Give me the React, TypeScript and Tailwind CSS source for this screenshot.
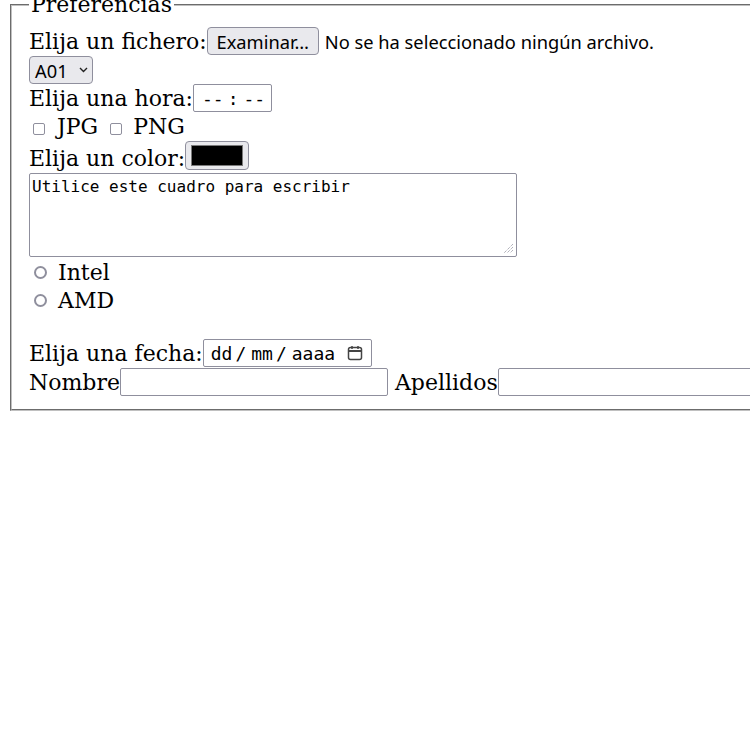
const sans = "font-['Noto_Sans',sans-serif]";
const mono = "font-['DejaVu_Sans_Mono',monospace]";

function GrayButton({ className, children }: { className: string; children?: React.ReactNode }) {
  return (
    <div className={`flex items-center border border-[#8f8f9d] bg-[#e9e9ed] rounded-[4px] ${className}`}>
      {children}
    </div>
  );
}

function Field({ className, children }: { className: string; children?: React.ReactNode }) {
  return (
    <div className={`flex items-center border border-[#8f8f9d] bg-white rounded-[2px] ${className}`}>
      {children}
    </div>
  );
}

function Checkbox() {
  return <span className="block w-[12px] h-[12px] mt-[6px] border border-[#8f8f9d] bg-white rounded-[2px]" />;
}

function Radio() {
  return <span className="block w-[13px] h-[13px] border-2 border-[#8f8f9d] bg-white rounded-full" />;
}

export default function App() {
  return (
    <div className="w-[750px] h-[750px] overflow-hidden bg-white text-black text-[22px] leading-[23px] font-['DejaVu_Serif',serif]">
      <fieldset className="ml-[10px] -mt-[6px] w-[780px] border-2 [border-style:groove] border-[#c0c0c0] pl-[17px] pr-[17px] pt-[11px] pb-[12px]">
        <legend className="px-[2px] leading-[22px]">Preferencias</legend>

        {/* fichero */}
        <div className="flex items-center h-[28px]">
          <span>Elija un fichero:</span>
          <GrayButton className={`w-[112px] h-[28px] justify-center text-[18.3px] ${sans}`}>Examinar…</GrayButton>
          <span className={`ml-[6px] text-[18.3px] ${sans}`}>No se ha seleccionado ningún archivo.</span>
        </div>

        {/* select */}
        <div className="flex items-end h-[29px]">
          <GrayButton className={`w-[64px] h-[28px] pl-[5px] text-[18.3px] ${sans}`}>
            <span>A01</span>
            <svg width="9" height="6" viewBox="0 0 9 6" className="ml-[11px]">
              <path d="M1 1 L4.5 4.5 L8 1" fill="none" stroke="#222" strokeWidth="1.4" />
            </svg>
          </GrayButton>
        </div>

        {/* hora */}
        <div className="flex items-center h-[28px]">
          <span>Elija una hora:</span>
          <Field className={`w-[79px] h-[28px] pl-[8px] text-[18px] ${mono}`}>
            <span>--</span>
            <span className="ml-[4px]">:</span>
            <span className="ml-[5px]">--</span>
          </Field>
        </div>

        {/* formatos */}
        <div className="flex items-center h-[28px]">
          <span className="ml-[4px]"><Checkbox /></span>
          <span className="ml-[12px]">JPG</span>
          <span className="ml-[12px]"><Checkbox /></span>
          <span className="ml-[11px]">PNG</span>
        </div>

        {/* color */}
        <div className="flex items-end h-[31px]">
          <span className="mb-[1px]">Elija un color:</span>
          <GrayButton className="w-[64px] h-[29px] mb-[1px] justify-center">
            <span className="block w-[52px] h-[21px] bg-black border border-[#7a7a7a]" />
          </GrayButton>
        </div>

        {/* texto */}
        <div className={`relative mt-[2px] w-[488px] h-[84px] border border-[#8f8f9d] rounded-[2px] pl-[2px] pt-[3px] text-[16px] leading-[19px] ${mono}`}>
          Utilice este cuadro para escribir
          <svg width="11" height="11" viewBox="0 0 11 11" className="absolute right-[2px] bottom-[2px]">
            <path d="M10 1 L1 10 M10 4 L4 10 M10 7 L7 10" stroke="#8f8f9d" strokeWidth="1" strokeDasharray="1 1" />
          </svg>
        </div>

        {/* procesador */}
        <div className="flex items-center h-[28px] mt-[1px]">
          <span className="ml-[5px]"><Radio /></span>
          <span className="ml-[11px]">Intel</span>
        </div>
        <div className="flex items-center h-[28px]">
          <span className="ml-[5px]"><Radio /></span>
          <span className="ml-[11px]">AMD</span>
        </div>
        <div className="h-[25px]" />

        {/* fecha */}
        <div className="flex items-center h-[29px]">
          <span>Elija una fecha:</span>
          <Field className={`self-start w-[169px] h-[28px] pl-[7px] text-[18px] ${mono}`}>
            <span>dd</span>
            <span className="ml-[3px]">/</span>
            <span className="ml-[5px]">mm</span>
            <span className="ml-[3px]">/</span>
            <span className="ml-[5px]">aaaa</span>
            <svg width="16" height="16" viewBox="0 0 16 16" className="ml-auto mr-[8px]">
              <rect x="1.5" y="2.5" width="13" height="12" rx="2" fill="none" stroke="#444" strokeWidth="1.5" />
              <path d="M1.5 6 H14.5" stroke="#444" strokeWidth="2" />
              <path d="M5 1 V4 M11 1 V4" stroke="#444" strokeWidth="1.5" />
            </svg>
          </Field>
        </div>

        {/* nombre */}
        <div className="flex items-center h-[29px]">
          <span>Nombre</span>
          <Field className="self-start w-[268px] h-[28px]" />
          <span className="ml-[7px]">Apellidos</span>
          <Field className="self-start w-[268px] h-[28px]" />
        </div>
      </fieldset>
    </div>
  );
}
